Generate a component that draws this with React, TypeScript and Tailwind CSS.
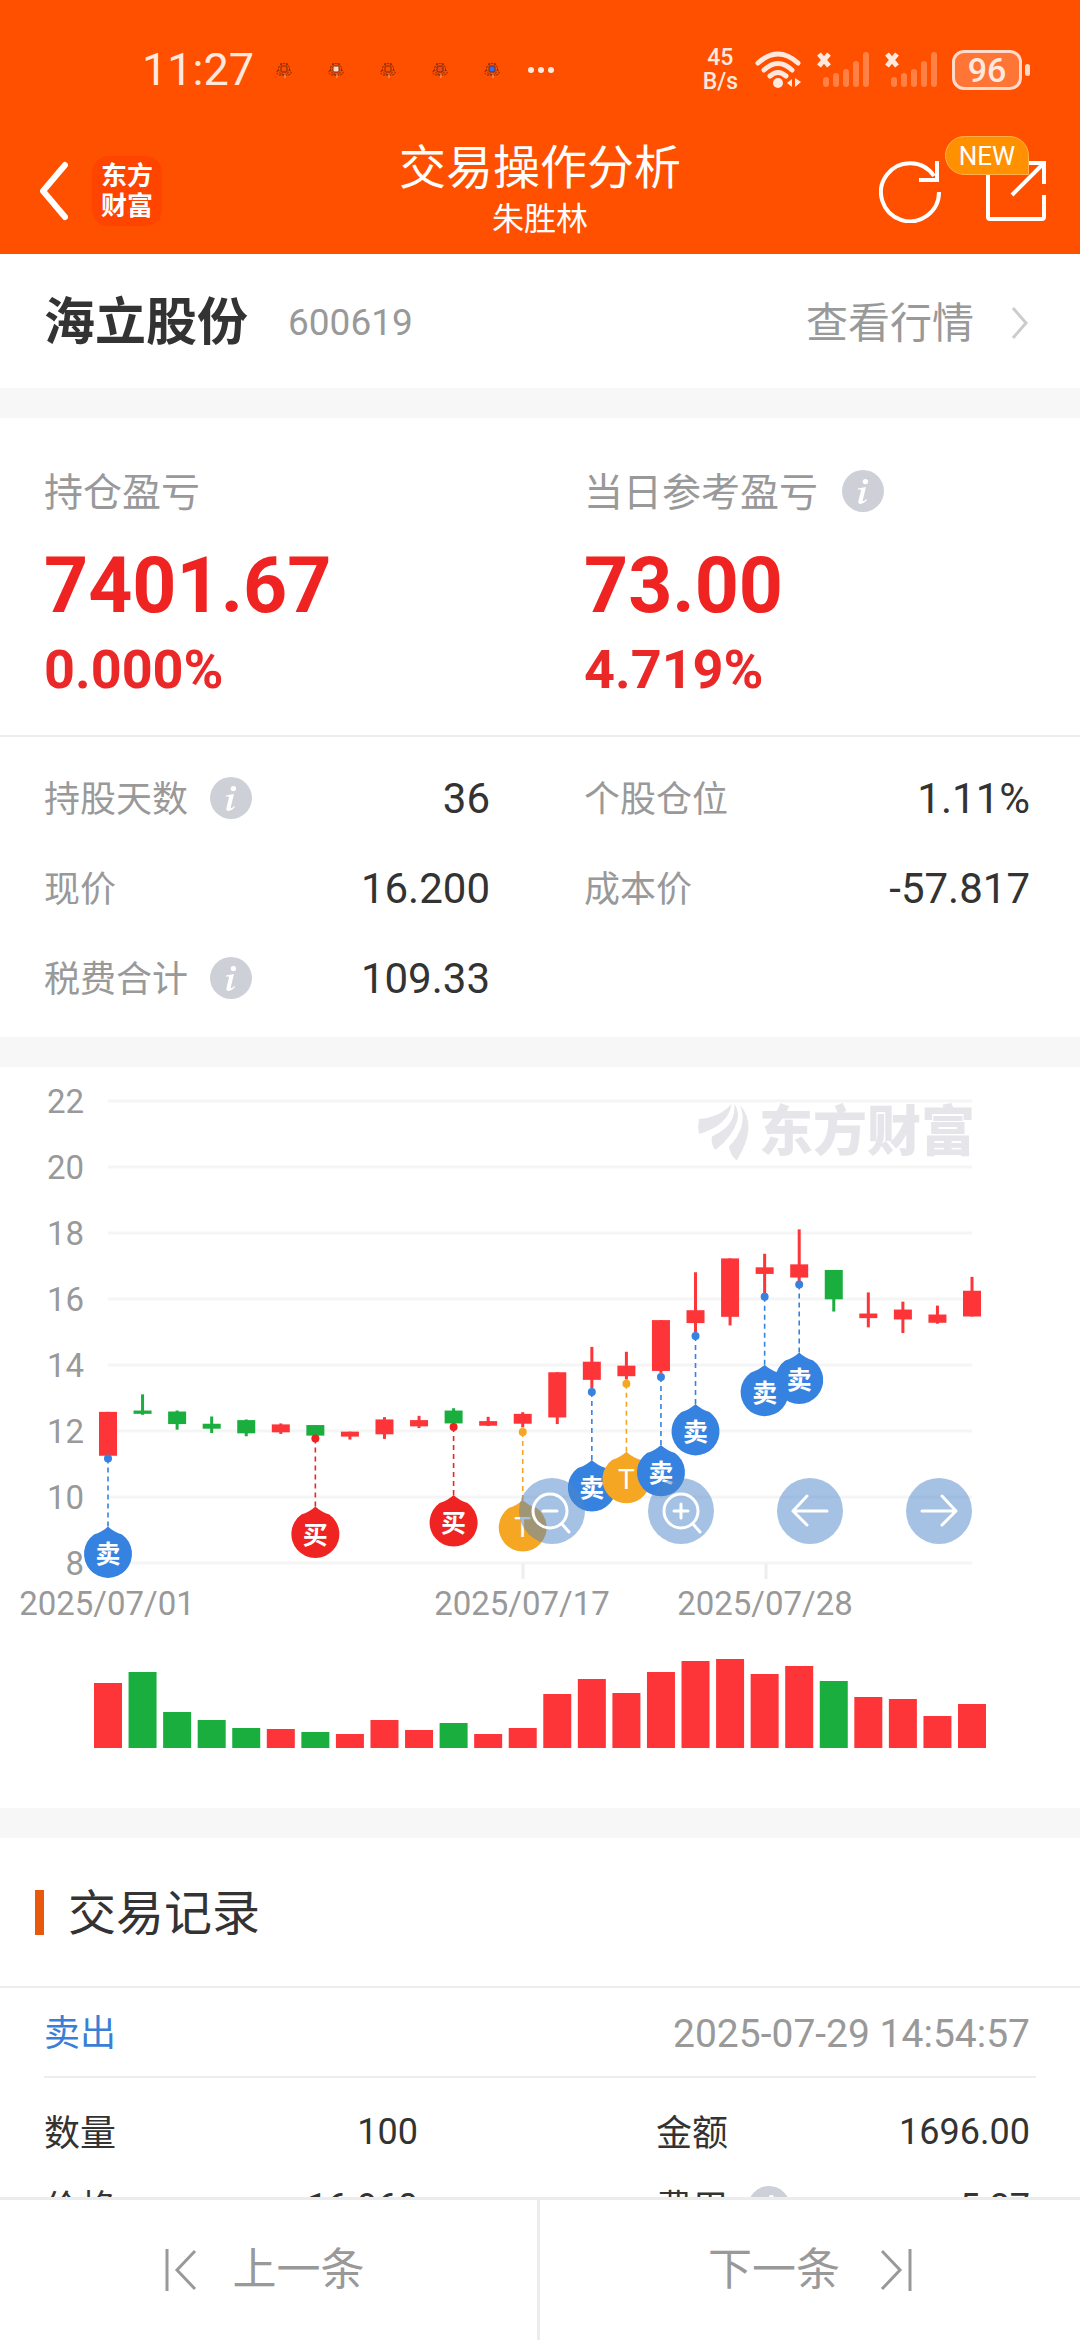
import type { ReactNode } from 'react';

type Candle = { up: boolean; high: number; top: number; bottom: number; low: number; volume: number };
type Kind = 'buy' | 'sell' | 't';

const candles: Candle[] = [
  { up: true, high: 12.58, top: 12.58, bottom: 11.25, low: 11.25, volume: 65 },
  { up: false, high: 13.11, top: 12.62, bottom: 12.52, low: 12.49, volume: 76 },
  { up: false, high: 12.62, top: 12.59, bottom: 12.21, low: 12.04, volume: 36 },
  { up: false, high: 12.44, top: 12.22, bottom: 12.07, low: 11.94, volume: 28 },
  { up: false, high: 12.35, top: 12.33, bottom: 11.93, low: 11.84, volume: 20 },
  { up: true, high: 12.23, top: 12.2, bottom: 11.96, low: 11.91, volume: 19 },
  { up: false, high: 12.18, top: 12.18, bottom: 11.86, low: 11.78, volume: 16 },
  { up: true, high: 11.98, top: 11.98, bottom: 11.83, low: 11.74, volume: 14 },
  { up: true, high: 12.42, top: 12.35, bottom: 11.9, low: 11.76, volume: 28 },
  { up: true, high: 12.46, top: 12.33, bottom: 12.14, low: 12.09, volume: 18 },
  { up: false, high: 12.69, top: 12.62, bottom: 12.23, low: 12.17, volume: 25 },
  { up: true, high: 12.43, top: 12.3, bottom: 12.16, low: 12.15, volume: 14 },
  { up: true, high: 12.57, top: 12.52, bottom: 12.22, low: 12.11, volume: 20 },
  { up: true, high: 13.78, top: 13.78, bottom: 12.41, low: 12.21, volume: 54 },
  { up: true, high: 14.55, top: 14.1, bottom: 13.55, low: 13.3, volume: 69 },
  { up: true, high: 14.4, top: 13.98, bottom: 13.66, low: 13.56, volume: 55 },
  { up: true, high: 15.36, top: 15.36, bottom: 13.82, low: 13.76, volume: 76 },
  { up: true, high: 16.81, top: 15.66, bottom: 15.27, low: 14.99, volume: 87 },
  { up: true, high: 17.23, top: 17.23, bottom: 15.46, low: 15.2, volume: 89 },
  { up: true, high: 17.37, top: 16.96, bottom: 16.76, low: 16.16, volume: 74 },
  { up: true, high: 18.11, top: 17.05, bottom: 16.65, low: 16.49, volume: 82 },
  { up: false, high: 16.88, top: 16.88, bottom: 15.99, low: 15.62, volume: 67 },
  { up: true, high: 16.2, top: 15.56, bottom: 15.42, low: 15.14, volume: 51 },
  { up: true, high: 15.92, top: 15.68, bottom: 15.38, low: 14.97, volume: 49 },
  { up: true, high: 15.8, top: 15.53, bottom: 15.28, low: 15.25, volume: 32 },
  { up: true, high: 16.67, top: 16.25, bottom: 15.47, low: 15.47, volume: 44 },
];

const trades: { index: number; price: number; kind: Kind }[] = [
  { index: 0, price: 11.17, kind: 'sell' },
  { index: 6, price: 11.77, kind: 'buy' },
  { index: 10, price: 12.12, kind: 'buy' },
  { index: 12, price: 11.97, kind: 't' },
  { index: 14, price: 13.18, kind: 'sell' },
  { index: 15, price: 13.43, kind: 't' },
  { index: 16, price: 13.64, kind: 'sell' },
  { index: 17, price: 14.88, kind: 'sell' },
  { index: 19, price: 16.07, kind: 'sell' },
  { index: 20, price: 16.44, kind: 'sell' },
];

const kindColor: Record<Kind, string> = { buy: '#f02323', sell: '#3682e0', t: '#f5a623' };
const kindText: Record<Kind, string> = { buy: '买', sell: '卖', t: 'T' };

const LEFT = 108;
const RIGHT = 972;
const VOLUME_BASE = 681;
const xOf = (i: number) => LEFT + (i * (RIGHT - LEFT)) / (candles.length - 1);
const yOf = (price: number) => 34 + (22 - price) * 33;

function InfoIcon({ label }: { label: string }) {
  return (
    <button type="button" aria-label={label} className="shrink-0">
      <svg viewBox="0 0 42 42" className="size-[42px]">
        <circle cx="21" cy="21" r="21" fill="#cdd1d7" />
        <circle cx="23.4" cy="11.6" r="2.7" fill="#fff" />
        <path d="M16 18.6l8-1.6-3.2 13c-.4 1.8.9 1.7 3.4-1l.8.8c-3 4.6-9.6 5.8-8.6 1.2l2.6-10.6c.2-.8-.6-1-3.2-.9z" fill="#fff" />
      </svg>
    </button>
  );
}

function SignalIcon() {
  return (
    <svg viewBox="0 0 54 38" className="h-[38px] w-[54px]">
      <path d="M3 3l10 12M13 3L3 15" stroke="#ffe9df" strokeWidth="5" />
      <path d="M10 29v4M20 25v8M30 21v12M40 13v20M50 4v29" stroke="#ff8145" strokeWidth="6" strokeLinecap="round" />
    </svg>
  );
}

function StatusBar() {
  return (
    <div className="flex h-[140px] items-center pl-[142px] pr-[50px] text-[#ffe9df]">
      <span className="text-[45px] leading-[48px]">11:27</span>
      <div className="ml-[22px] flex items-center gap-9">
        {['#ff5000', '#ffd9c9', '#ff5000', '#e8481c', '#2f6cf0'].map((c, i) => (
          <svg key={i} viewBox="0 0 16 16" className="size-4" fill="none" stroke="#7a2608">
            <circle cx="8" cy="7" r="5.5" strokeDasharray="2 1" />
            <rect x="5" y="4" width="6" height="6" rx="1" fill={c} />
            <path d="M2 8q-3 4 2 5h8q5-1 2-5M5 1v2M11 1v2" strokeDasharray="2 1" />
            <path d="M9 12v4" stroke="#e0b080" />
          </svg>
        ))}
      </div>
      <svg viewBox="0 0 26 6" className="ml-7 h-[6px] w-[26px]" fill="#ffe9df">
        <circle cx="3" cy="3" r="3" />
        <circle cx="13" cy="3" r="3" />
        <circle cx="23" cy="3" r="3" />
      </svg>
      <div className="ml-auto flex items-center">
        <div className="text-center text-[23px] font-medium leading-[24px]">45<br />B/s</div>
        <svg viewBox="0 0 48 38" className="ml-4 h-[38px] w-[48px]" fill="none" stroke="#ffe9df" strokeWidth="5" strokeLinecap="round">
          <path d="M4 12Q24-6 44 12M10 19Q24 6 38 19M16 25Q24 18 32 25" />
          <circle cx="24" cy="32" r="5" fill="#ffe9df" stroke="none" />
          <path d="M38 28v8l-5-4zM41 27v9l6-5z" fill="#ffe9df" stroke="none" />
        </svg>
        <div className="ml-[14px] flex gap-[14px]">
          <SignalIcon />
          <SignalIcon />
        </div>
        <div className="ml-[14px] flex h-10 w-[70px] items-center justify-center rounded-xl border-3 border-[#ffd9c9] bg-[#ff7536] text-[34px] font-medium leading-8">96</div>
        <div className="ml-[3px] h-3 w-[5px] rounded-sm bg-[#ffd9c9]" />
      </div>
    </div>
  );
}

function Header() {
  return (
    <header className="shrink-0 bg-[#ff5000] text-white">
      <StatusBar />
      <div className="grid h-[114px] grid-cols-[1fr_auto_1fr] items-center pb-3">
        <div className="flex items-center gap-6 pl-[38px]">
          <button type="button" aria-label="返回">
            <svg viewBox="0 0 30 60" className="h-[60px] w-[30px]" fill="none" stroke="#fff" strokeWidth="6" strokeLinecap="round" strokeLinejoin="round">
              <path d="M27 4L5 30l22 26" />
            </svg>
          </button>
          <a href="#home" className="flex size-[70px] flex-col items-center justify-center rounded-2xl bg-[#ff4400] text-[26px] font-bold leading-[30px]">
            <span>东方</span>
            <span>财富</span>
          </a>
        </div>
        <div className="text-center">
          <h1 className="text-[47px] leading-[56px]">交易操作分析</h1>
          <p className="text-[32px] leading-[46px]">朱胜林</p>
        </div>
        <div className="flex items-center justify-end gap-[42px] pr-[33px]">
          <button type="button" aria-label="刷新">
            <svg viewBox="0 0 64 64" className="size-[64px]" fill="none" stroke="#fff" strokeWidth="4">
              <path d="M60 33A29 29 0 1 1 55 17" />
              <path d="M58 2v19H40" />
            </svg>
          </button>
          <button type="button" aria-label="分享" className="relative">
            <svg viewBox="0 0 62 62" className="size-[62px]" fill="none" stroke="#fff" strokeWidth="4">
              <path d="M3 12v45a2 2 0 0 0 2 2h52a2 2 0 0 0 2-2V35" />
              <path d="M40 3h19v21M59 3L27 35" />
            </svg>
            <span className="absolute -left-10 -top-6 flex h-[39px] w-[84px] items-center justify-center rounded-[20px] rounded-br-none border border-[#ffb04d] bg-[#ff9000] text-[26px] leading-[26px]">NEW</span>
          </button>
        </div>
      </div>
    </header>
  );
}

function Metric({ label, info, value }: { label: string; info?: boolean; value: string }) {
  return (
    <div className="flex h-[90px] items-center">
      <dt className="flex items-center gap-[22px] text-[36px] text-[#999]">
        <span className="pt-1">{label}</span>
        {info && <InfoIcon label={`${label}说明`} />}
      </dt>
      <dd className="ml-auto text-[42px]">{value}</dd>
    </div>
  );
}

function Profit({ label, info, amount, percent }: { label: string; info?: boolean; amount: string; percent: string }) {
  return (
    <div>
      <div className="flex h-[58px] items-center gap-6 text-[39px] text-[#999]">
        <span className="pt-1">{label}</span>
        {info && <InfoIcon label={`${label}说明`} />}
      </div>
      <p className="mt-[22px] text-[77px] font-bold leading-[88px] text-[#f02323]">{amount}</p>
      <p className="mt-[10px] text-[54px] font-bold leading-[60px] text-[#eb2828]">{percent}</p>
    </div>
  );
}

function Pin({ index, price, kind }: { index: number; price: number; kind: Kind }) {
  const x = xOf(index);
  const y = yOf(price);
  const color = kindColor[kind];
  return (
    <g>
      <path d={`M${x} ${y}v68`} stroke={color} strokeWidth="1.6" strokeDasharray="5 4" />
      <circle cx={x} cy={y} r="4" fill={color} />
      <path d={`M${x} ${y + 68}q5 5 14 8a24 24 0 1 1-28 0q9-3 14-8z`} fill={color} />
      <text x={x} y={y + 105} textAnchor="middle" fontSize={kind === 't' ? 28 : 25} fontWeight={kind === 't' ? 400 : 700} fill="#fff">
        {kindText[kind]}
      </text>
    </g>
  );
}

function ChartButton({ label, children }: { label: string; children: ReactNode }) {
  return (
    <button type="button" aria-label={label} className="size-[66px] rounded-full bg-[#4b85c9]/50">
      <svg viewBox="0 0 66 66" className="size-[66px]" fill="none" stroke="#fff" strokeWidth="3" strokeLinecap="round" strokeLinejoin="round">
        {children}
      </svg>
    </button>
  );
}

function Chart() {
  return (
    <section className="relative bg-white" aria-label="K线图">
      <svg viewBox="0 0 1080 741" className="block w-full">
        {[22, 20, 18, 16, 14, 12, 10, 8].map(p => (
          <g key={p}>
            <path d={`M${LEFT} ${yOf(p)}H${RIGHT}`} stroke="#f5f5f5" strokeWidth="3" />
            <text x="84" y={yOf(p) + 12} textAnchor="end" fontSize="33" fill="#999">{p}</text>
          </g>
        ))}

        {/* watermark */}
        <g fill="#e6e5ea">
          <path
            transform="translate(690 23) scale(.333)"
            d="M125 42Q116 106 27 132Q22 110 27 87Q90 82 125 42zM133 42Q150 66 142 92Q128 140 76 180Q60 160 67 139Q140 106 133 42zM150 45Q206 106 140 212Q120 195 117 170Q176 110 150 45z"
          />
          <text x="759" y="84" fontSize="54" fontWeight="900">东方财富</text>
        </g>

        {candles.map((c, i) => {
          const color = c.up ? '#fd3539' : '#1aae3f';
          return (
            <g key={i} fill={color}>
              <rect x={xOf(i) - 1.5} y={yOf(c.high)} width="3" height={yOf(c.low) - yOf(c.high)} />
              <rect x={xOf(i) - 9} y={yOf(c.top)} width="18" height={yOf(c.bottom) - yOf(c.top)} />
              <rect x={xOf(i) - 14} y={VOLUME_BASE - c.volume} width="28" height={c.volume} />
            </g>
          );
        })}

        <path d="M523 497v15M766 497v15" stroke="#eee" strokeWidth="3" />
        {trades.map(t => <Pin key={t.index} {...t} />)}

        <g fontSize="33" fill="#999" textAnchor="middle">
          <text x="107" y="548">2025/07/01</text>
          <text x="522" y="548">2025/07/17</text>
          <text x="765" y="548">2025/07/28</text>
        </g>
      </svg>
      <div className="absolute right-[10%] top-[411px] flex gap-[63px]">
        <ChartButton label="缩小">
          <circle cx="31" cy="33" r="17" />
          <path d="M24 33h14M43 46l7 8" />
        </ChartButton>
        <ChartButton label="放大">
          <circle cx="33" cy="33" r="17" />
          <path d="M26 33h14M33 26v14M45 46l7 8" />
        </ChartButton>
        <ChartButton label="左移">
          <path d="M50 33H16M30 18L16 33l14 14" />
        </ChartButton>
        <ChartButton label="右移">
          <path d="M16 33h34M36 18l14 15-14 14" />
        </ChartButton>
      </div>
    </section>
  );
}

function RecordItem({ label, info, value }: { label: string; info?: boolean; value: string }) {
  return (
    <div className="flex h-[75px] items-center">
      <dt className="flex items-center gap-5">
        <span className="pt-1">{label}</span>
        {info && <InfoIcon label={`${label}说明`} />}
      </dt>
      <dd className="ml-auto">{value}</dd>
    </div>
  );
}

export default function App() {
  return (
    <div className="flex h-screen flex-col overflow-hidden bg-[#f7f7f7] font-[Roboto,'Noto_Sans_CJK_SC',sans-serif] text-[#333]">
      <Header />

      <main className="flex min-h-0 flex-1 flex-col gap-[30px] overflow-hidden *:shrink-0">
        <section className="flex h-[134px] items-center bg-white pl-11 pr-[50px] pt-1">
          <h2 className="text-[51px] font-bold">海立股份</h2>
          <span className="ml-10 text-[37px] text-[#999]">600619</span>
          <a href="#quote" className="ml-auto flex items-center gap-9 text-[42px] text-[#999]">
            查看行情
            <svg viewBox="0 0 20 34" className="h-[34px] w-5" fill="none" stroke="#ccc" strokeWidth="3">
              <path d="M3 2l13 15L3 32" />
            </svg>
          </a>
        </section>

        <section className="bg-white">
          <div className="grid grid-cols-2 gap-x-[88px] border-b-2 border-[#ededed] px-11 pb-[35px] pt-[44px]">
            <Profit label="持仓盈亏" amount="7401.67" percent="0.000%" />
            <Profit label="当日参考盈亏" info amount="73.00" percent="4.719%" />
          </div>
          <dl className="grid grid-cols-2 gap-x-[94px] pb-[14px] pl-11 pr-[50px] pt-4">
            <Metric label="持股天数" info value="36" />
            <Metric label="个股仓位" value="1.11%" />
            <Metric label="现价" value="16.200" />
            <Metric label="成本价" value="-57.817" />
            <Metric label="税费合计" info value="109.33" />
          </dl>
        </section>

        <Chart />

        <section className="bg-white">
          <div className="flex h-[150px] items-center gap-6 border-b-2 border-[#ededed] pl-[35px]">
            <span className="h-[45px] w-[9px] bg-[#e8590c]" />
            <h2 className="pt-1 text-[48px]">交易记录</h2>
          </div>
          <div className="mx-11 flex h-[90px] items-center justify-between border-b-2 border-[#ededed] pr-[6px] pt-1 text-[36px]">
            <span className="text-[#3a7fd5]">卖出</span>
            <time className="text-[39px] text-[#999]">2025-07-29 14:54:57</time>
          </div>
          <dl className="grid grid-cols-[374px_374px] justify-between pl-11 pr-[50px] pt-4 text-[36px]">
            <RecordItem label="数量" value="100" />
            <RecordItem label="金额" value="1696.00" />
            <RecordItem label="价格" value="16.960" />
            <RecordItem label="费用" info value="5.87" />
          </dl>
        </section>
      </main>

      <footer className="grid h-[143px] shrink-0 grid-cols-2 border-t-3 border-[#ececec] bg-white text-[44px] text-[#999]">
        <button type="button" className="flex items-center justify-center gap-9 border-r-3 border-[#ececec] pr-2">
          <svg viewBox="0 0 32 42" className="h-[42px] w-8" fill="none" stroke="currentColor" strokeWidth="3">
            <path d="M2 0v42M30 2L12 21l18 19" />
          </svg>
          上一条
        </button>
        <button type="button" className="flex items-center justify-center gap-10">
          下一条
          <svg viewBox="0 0 32 42" className="h-[42px] w-8" fill="none" stroke="currentColor" strokeWidth="3">
            <path d="M30 0v42M2 2l18 19L2 40" />
          </svg>
        </button>
      </footer>
    </div>
  );
}
